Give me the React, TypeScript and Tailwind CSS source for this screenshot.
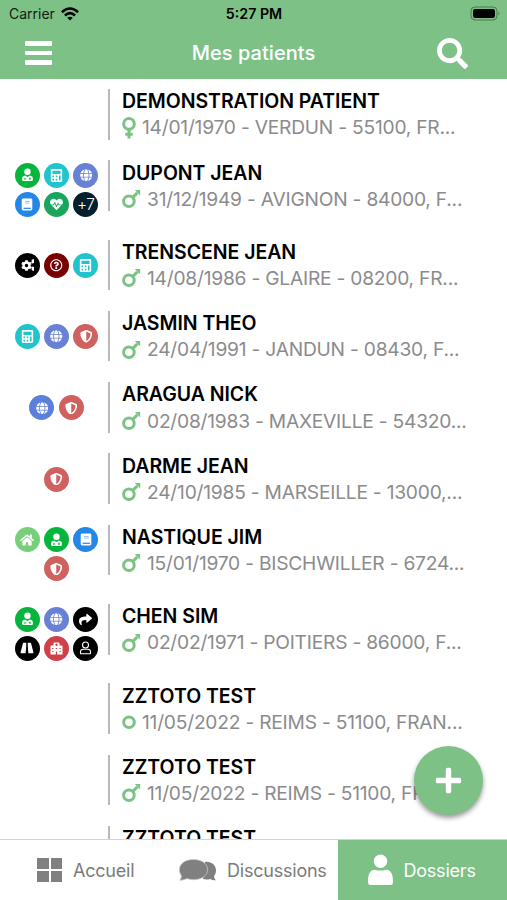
import type { ReactNode } from "react";
import { FaCalculator, FaGlobe, FaHeartbeat, FaRegQuestionCircle, FaShieldAlt, FaShare, FaHome, FaSearch, FaPlus, FaCog } from "react-icons/fa";

type Kind = "doctor" | "calc" | "globe" | "globe2" | "book" | "heart" | "more" | "cogs" | "question" | "shield" | "home" | "share" | "road" | "hospital" | "user";
type Gender = "female" | "male" | "other";

const colors: Record<Kind, string> = {
  doctor: "bg-[#06b53c]",
  calc: "bg-[#21c3cd]",
  globe: "bg-[#6981d4]",
  globe2: "bg-[#5b80dc]",
  book: "bg-[#2487e8]",
  heart: "bg-[#18a65c]",
  more: "bg-[#04202f]",
  cogs: "bg-black",
  question: "bg-[#790000]",
  shield: "bg-[#d06161]",
  home: "bg-[#77cf79]",
  share: "bg-black",
  road: "bg-black",
  hospital: "bg-[#cf4048]",
  user: "bg-black",
};

const glyphs: Record<Kind, ReactNode> = {
  doctor: (
    <svg viewBox="0 0 13 14" width="13" height="14" fill="currentColor">
      <circle cx="6.500" cy="3.700" r="3.200" />
      <path d="M4 7.500 6.500 9 9 7.500q2.900.5 2.900 3v1.300q0 1.200-1.200 1.200H2.300q-1.200 0-1.200-1.200v-1.300q0-2.500 2.900-3Z" />
      <path d="M3.400 11.700v-1.100h1.400v1.100M8.900 9.600v2.400M7.700 10.800h2.400" fill="none" stroke="#06b53c" strokeWidth=".8" />
    </svg>
  ),
  calc: <FaCalculator size={13} />,
  globe: <FaGlobe size={12.5} />,
  globe2: <FaGlobe size={12.5} />,
  book: (
    <svg viewBox="0 0 12 13" width="12" height="13" fill="currentColor">
      <rect x=".7" y=".5" width="10.600" height="12" rx="1.400" />
      <path d="M2.600 10.300h7.400" stroke="#2487e8" strokeWidth="1.200" />
      <path d="M4 3.500h4.600M4 5.100h4.600" stroke="#7db7f1" strokeWidth=".8" />
    </svg>
  ),
  heart: <FaHeartbeat size={13} />,
  more: <span className="text-[15.500px] font-light leading-none tracking-[-0.5px]">+7</span>,
  cogs: (
    <span className="flex w-[13px] items-center overflow-hidden">
      <FaCog size={11} className="shrink-0" />
      <svg viewBox="0 0 3 12" width="3" height="12" className="-ml-[0.500px] shrink-0" fill="currentColor">
        <path d="M3 0v4L1.500 4.600 0 3.500 1 2 .3 1 2 .2ZM3 8v4L1.500 11.600.3 11 1 9.900 0 8.500 1.500 7.400Z" />
      </svg>
    </span>
  ),
  question: <FaRegQuestionCircle size={12.5} />,
  shield: <FaShieldAlt size={12.5} />,
  home: <FaHome size={14} />,
  share: <FaShare size={13} />,
  road: (
    <svg viewBox="0 0 14 12" width="14" height="12" fill="currentColor">
      <path d="M3.700.8h2.600L6 8.500h-.2l-.2 2.800H1.300q-1 0-.7-1L2.900 1.500q.2-.7.800-.7ZM7.700.8h2.600q.6 0 .8.700l2.300 8.800q.3 1-.7 1H8.400L8.200 8.500H8Z" />
    </svg>
  ),
  hospital: (
    <svg viewBox="0 0 13 13" width="13" height="13" fill="currentColor">
      <path fillRule="evenodd" d="M3.500 3.600V1.400Q3.500.5 4.400.5h4.200q.9 0 .9.900v2.200h2q1 0 1 1v7.900H.5V4.600q0-1 1-1ZM6 1.500v.8h-.8v1H6v.8h1v-.8h.8v-1H7v-.8ZM2.200 6v1h1.300V6ZM5.800 6v1h1.400V6ZM9.500 6v1h1.300V6ZM2.200 9v1h1.300V9ZM9.500 9v1h1.300V9ZM5.900 9.400v3.100h1.200V9.400Z" />
    </svg>
  ),
  user: (
    <svg viewBox="0 0 13 14" width="13" height="14" fill="none" stroke="currentColor" strokeWidth="1.100">
      <circle cx="6.500" cy="4" r="3" />
      <path d="M4.500 8.200h4q3 0 3 2.400v1.600q0 .6-.6.600H2.100q-.6 0-.6-.6v-1.600q0-2.400 3-2.400Z" />
    </svg>
  ),
};

function Badge({ kind }: { kind: Kind }) {
  return <span className={`flex size-[25px] items-center justify-center rounded-full text-white ${colors[kind]}`}>{glyphs[kind]}</span>;
}

function GenderIcon({ gender }: { gender: Gender }) {
  if (gender === "male") {
    return (
      <svg viewBox="0 0 19 20" width="19" height="20" className="mr-[6px] shrink-0" fill="none" stroke="#7dc285" strokeWidth="3">
        <circle cx="6.900" cy="12.300" r="5.300" />
        <path d="M10.800 8.400 15.300 3.900" />
        <path d="M12.800 1h5.400v5.400Z" fill="#7dc285" stroke="none" />
      </svg>
    );
  }
  return (
    <svg viewBox="0 0 14 22" width="14" height="22" className="mr-[6px] shrink-0" fill="none" stroke="#7dc285" strokeWidth="3">
      <circle cx="7" cy={gender === "female" ? 6.900 : 11.200} r="5.300" />
      {gender === "female" && <path d="M7 12v9.500M3.300 17.300h7.400" />}
    </svg>
  );
}

interface Patient {
  name: string;
  info: string;
  gender: Gender;
  badges: Kind[];
}

const patients: Patient[] = [
  { name: "DEMONSTRATION PATIENT", info: "14/01/1970 - VERDUN - 55100, FR...", gender: "female", badges: [] },
  { name: "DUPONT JEAN", info: "31/12/1949 - AVIGNON - 84000, F...", gender: "male", badges: ["doctor", "calc", "globe", "book", "heart", "more"] },
  { name: "TRENSCENE JEAN", info: "14/08/1986 - GLAIRE - 08200, FR...", gender: "male", badges: ["cogs", "question", "calc"] },
  { name: "JASMIN THEO", info: "24/04/1991 - JANDUN - 08430, F...", gender: "male", badges: ["calc", "globe", "shield"] },
  { name: "ARAGUA NICK", info: "02/08/1983 - MAXEVILLE - 54320...", gender: "male", badges: ["globe2", "shield"] },
  { name: "DARME JEAN", info: "24/10/1985 - MARSEILLE - 13000,...", gender: "male", badges: ["shield"] },
  { name: "NASTIQUE JIM", info: "15/01/1970 - BISCHWILLER - 6724...", gender: "male", badges: ["home", "doctor", "book", "shield"] },
  { name: "CHEN SIM", info: "02/02/1971 - POITIERS - 86000, F...", gender: "male", badges: ["doctor", "globe", "share", "road", "hospital", "user"] },
  { name: "ZZTOTO TEST", info: "11/05/2022 - REIMS - 51100, FRAN...", gender: "other", badges: [] },
  { name: "ZZTOTO TEST", info: "11/05/2022 - REIMS - 51100, FRAN...", gender: "male", badges: [] },
  { name: "ZZTOTO TEST", info: "11/05/2022 - REIMS - 51100, FRAN...", gender: "male", badges: [] },
];

function PatientRow({ patient }: { patient: Patient }) {
  const tall = patient.badges.length > 3;
  return (
    <li className={`flex shrink-0 ${tall ? "h-[79.400px]" : "h-[71.250px]"}`}>
      <div className="ml-[11.500px] flex w-[90px] shrink-0 flex-wrap content-center items-center justify-center gap-[4.300px]">
        {patient.badges.map((kind, i) => <Badge key={i} kind={kind} />)}
      </div>
      <div className="mt-[10px] ml-[6.500px] h-[50.500px] w-[2px] shrink-0 bg-[#b9b9bb]" />
      <div className="ml-3 pt-[10.300px]">
        <h2 className="h-[25px] whitespace-nowrap text-[19.500px] leading-[25px] font-semibold tracking-[-0.040px] text-black">{patient.name}</h2>
        <p className="flex h-[27px] items-center whitespace-nowrap text-[19.200px] tracking-[-0.220px] text-[#8b8b8d]">
          <GenderIcon gender={patient.gender} />
          <span>{patient.info}</span>
        </p>
      </div>
    </li>
  );
}

export default function App() {
  return (
    <div className="relative flex h-[900px] w-[507px] flex-col overflow-hidden bg-white font-['Inter','Liberation_Sans',sans-serif]">
      <header className="h-[79px] shrink-0 bg-[#7dc187]">
        <div className="grid h-[27px] grid-cols-[1fr_auto_1fr] items-center pr-[6px] pl-[9px] text-[14px] text-[#111c13]">
          <div className="flex items-center gap-[6px]">
            <span>Carrier</span>
            <svg viewBox="0 0 18 14" width="18" height="14" fill="none" stroke="black" strokeWidth="2.600">
              <path d="M.9 5.200q8.100-7.400 16.200 0M3.900 8.500q5.100-4.600 10.200 0" />
              <path d="M9 13.500 6.200 10.700q2.800-2 5.600 0Z" fill="black" stroke="none" />
            </svg>
          </div>
          <span className="-translate-x-[1px] text-center text-[14.200px] font-semibold text-black">5:27 PM</span>
          <svg viewBox="0 0 31 15" width="31" height="15" className="justify-self-end">
            <rect x="1" y="1" width="26" height="13" rx="4" fill="none" stroke="#4d7853" />
            <rect x="3" y="3" width="22" height="9" rx="2" fill="black" />
            <path d="M28.500 5.500q2 2-0 4Z" fill="#4d7853" />
          </svg>
        </div>
        <div className="grid h-[52px] grid-cols-[1fr_auto_1fr] items-center pr-[39px] pl-[25px] text-white">
          <div className="flex flex-col gap-[5px]">
            <i className="h-[4.600px] w-[27px] rounded-[1px] bg-white" />
            <i className="h-[4.600px] w-[27px] rounded-[1px] bg-white" />
            <i className="h-[4.600px] w-[27px] rounded-[1px] bg-white" />
          </div>
          <h1 className="ml-[14px] text-[20px] font-medium tracking-[0.050px]">Mes patients</h1>
          <FaSearch size={31} className="justify-self-end" />
        </div>
      </header>
      <ul className="flex min-h-0 flex-1 flex-col overflow-hidden">
        {patients.map((patient, i) => <PatientRow key={i} patient={patient} />)}
      </ul>
      <nav className="flex h-[61px] shrink-0 border-t border-[#d4d4d6] text-[18px] tracking-[-0.220px] text-[#7b7b7d]">
        <div className="flex w-[169px] items-center pl-[37px]">
          <div className="grid grid-cols-2 gap-[2px]">
            <i className="h-[11px] w-[11.500px] bg-[#808080]" />
            <i className="h-[11px] w-[11.500px] bg-[#808080]" />
            <i className="h-[11px] w-[11.500px] bg-[#808080]" />
            <i className="h-[11px] w-[11.500px] bg-[#808080]" />
          </div>
          <span className="ml-[11px]">Accueil</span>
        </div>
        <div className="flex w-[169px] items-center pl-[10px]">
          <svg viewBox="0 0 38 22" width="38" height="22" fill="#808080">
            <path d="M26 2.900c6-1 11 2.800 11 8.600 0 2.300-.7 4-1.900 5.500.1 1.600.6 3 1.700 4.300-2.400.1-4.200-.5-5.600-1.400-2 .8-4.700.9-7.200.2Z" />
            <path stroke="#c9c9c9" strokeWidth=".8" d="M14.500.5C22.500.5 28.600 4.500 28.600 10.600S22.500 20.700 14.500 20.700c-2.500 0-4.800-.4-6.700-1.100-2.100 1.200-4.500 1.700-7 1.600 1.200-1.500 1.600-3 1.500-4.700C1.100 14.900.4 12.900.4 10.600.4 4.500 6.500.5 14.500.5Z" />
          </svg>
          <span className="ml-[10px] whitespace-nowrap">Discussions</span>
        </div>
        <div className="flex flex-1 items-center bg-[#7dc187] pl-[30px] text-white">
          <svg viewBox="0 0 25 32" width="25" height="32" fill="currentColor">
            <circle cx="12.500" cy="7.300" r="6.700" />
            <path d="M6.500 15.700q6 1.800 12 0c4.500.5 6.400 5 6.400 10.300v2.700Q24.900 31 22.500 31h-20Q.1 31 .1 28.700V26C.1 20.700 2 16.200 6.500 15.700Z" />
          </svg>
          <span className="ml-[10.500px]">Dossiers</span>
        </div>
      </nav>
      <button className="absolute top-[746px] left-[414px] flex size-[69px] items-center justify-center rounded-full bg-[#7dc187] text-white shadow-[0_3px_5px_rgba(0,0,0,0.4)]">
        <FaPlus size={29} />
      </button>
    </div>
  );
}
